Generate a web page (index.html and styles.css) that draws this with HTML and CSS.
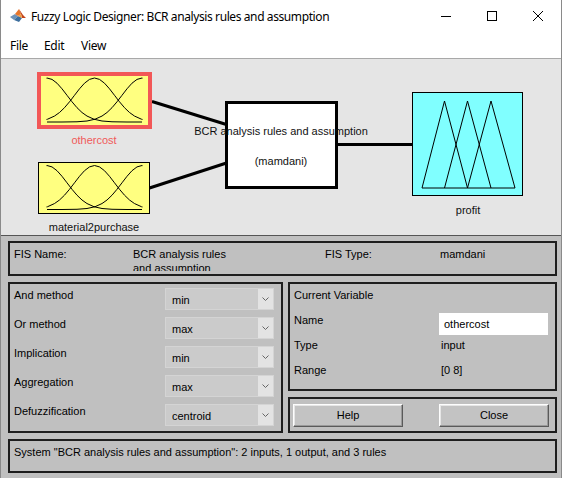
FILE: index.html
```html
<!DOCTYPE html>
<html>
<head>
<meta charset="utf-8">
<title>Fuzzy Logic Designer</title>
<link rel="stylesheet" href="styles.css">
</head>
<body>
<div class="window">
  <div class="titlebar">
    <svg class="app-icon" width="16" height="14" viewBox="0 0 16 14">
      <polygon points="0,8 5,5 8,7 4,11" fill="#6f93b8"/>
      <polygon points="4,11 8,7 12,9 9,13" fill="#3d6f9e"/>
      <polygon points="5,5 9,0 11,5 8,7" fill="#e8762b"/>
      <polygon points="9,0 13,6 16,9 12,9 11,5" fill="#c2441a"/>
      <polygon points="8,7 11,5 12,9" fill="#f09a3e"/>
    </svg>
    <span class="title">Fuzzy Logic Designer: BCR analysis rules and assumption</span>
    <div class="controls">
      <span class="ctl"><svg width="10" height="10" viewBox="0 0 10 10"><line x1="0" y1="5.5" x2="10" y2="5.5" stroke="#000" stroke-width="1"/></svg></span>
      <span class="ctl"><svg width="10" height="10" viewBox="0 0 10 10"><rect x="0.5" y="0.5" width="9" height="9" fill="none" stroke="#000" stroke-width="1"/></svg></span>
      <span class="ctl"><svg width="10" height="10" viewBox="0 0 10 10"><path d="M0,0 L10,10 M10,0 L0,10" stroke="#000" stroke-width="1"/></svg></span>
    </div>
  </div>
  <div class="menubar">
    <span class="menu-item m-file">File</span>
    <span class="menu-item m-edit">Edit</span>
    <span class="menu-item">View</span>
  </div>
  <div class="diagram">
    <svg width="560" height="176" viewBox="1 59 560 176">
      <defs>
        <path id="gauss" d="M-95,0 L-80,0 L-65,-0.22 L-55,-1 L-47,-2.78 L-40,-5.95 L-35,-9.5 L-30,-14.3 L-25,-20.2 L-20,-26.7 L-15,-33.2 L-10,-38.8 L-5,-42.6 L0,-44 L5,-42.6 L10,-38.8 L15,-33.2 L20,-26.7 L25,-20.2 L30,-14.3 L35,-9.5 L40,-5.95 L47,-2.78 L55,-1 L65,-0.22 L80,0 L95,0" fill="none" stroke="#000" stroke-width="1" stroke-linejoin="round"/>
        <clipPath id="c1"><rect x="46.5" y="70" width="96" height="60"/></clipPath>
        <clipPath id="c2"><rect x="46.5" y="160" width="96" height="55"/></clipPath>
      </defs>
      <line x1="152" y1="101.5" x2="228" y2="125" stroke="#000" stroke-width="3"/>
      <line x1="149.5" y1="188" x2="228" y2="162.5" stroke="#000" stroke-width="3"/>
      <line x1="336" y1="144.5" x2="412.5" y2="144.5" stroke="#000" stroke-width="3"/>

      <rect x="39" y="74" width="111" height="53" fill="#ffff80" stroke="#f25757" stroke-width="4"/>
      <g clip-path="url(#c1)">
        <use href="#gauss" transform="translate(47,122)"/>
        <use href="#gauss" transform="translate(94.5,122)"/>
        <use href="#gauss" transform="translate(142,122)"/>
      </g>
      <text class="lbl-red" x="94" y="144" text-anchor="middle">othercost</text>

      <rect x="38.5" y="162.5" width="111" height="51" fill="#ffff80" stroke="#000" stroke-width="1"/>
      <g clip-path="url(#c2)">
        <use href="#gauss" transform="translate(47,209.5)"/>
        <use href="#gauss" transform="translate(94.5,209.5)"/>
        <use href="#gauss" transform="translate(142,209.5)"/>
      </g>
      <text class="lbl" x="94" y="231" text-anchor="middle">material2purchase</text>

      <rect x="226.5" y="102.5" width="110" height="85" fill="#fff" stroke="#000" stroke-width="3"/>
      <text class="lbl" x="281" y="135" text-anchor="middle">BCR analysis rules and assumption</text>
      <text class="lbl" x="281" y="165" text-anchor="middle">(mamdani)</text>

      <rect x="412.5" y="92.5" width="110" height="103" fill="#80ffff" stroke="#000" stroke-width="1"/>
      <g fill="none" stroke="#000" stroke-width="1">
        <polyline points="422,188 444.5,101 467.5,188"/>
        <polyline points="444.5,188 467.5,101 491,188"/>
        <polyline points="467.5,188 491,101 515,188"/>
        <line x1="422" y1="188" x2="515" y2="188"/>
      </g>
      <text class="lbl" x="468" y="214" text-anchor="middle">profit</text>
    </svg>
  </div>
  <div class="lower">
    <div class="panel fis">
      <span class="f-label">FIS Name:</span>
      <span class="f-name">BCR analysis rules and assumption</span>
      <span class="f-type">FIS Type:</span>
      <span class="f-val">mamdani</span>
    </div>
    <div class="mid">
      <div class="panel methods">
        <div class="row"><span class="lbl">And method</span><div class="select"><span class="val">min</span><span class="arr"><svg width="7" height="4" viewBox="0 0 7 4"><polyline points="0.5,0.5 3.5,3.5 6.5,0.5" fill="none" stroke="#666" stroke-width="1"/></svg></span></div></div>
        <div class="row"><span class="lbl">Or method</span><div class="select"><span class="val">max</span><span class="arr"><svg width="7" height="4" viewBox="0 0 7 4"><polyline points="0.5,0.5 3.5,3.5 6.5,0.5" fill="none" stroke="#666" stroke-width="1"/></svg></span></div></div>
        <div class="row"><span class="lbl">Implication</span><div class="select"><span class="val">min</span><span class="arr"><svg width="7" height="4" viewBox="0 0 7 4"><polyline points="0.5,0.5 3.5,3.5 6.5,0.5" fill="none" stroke="#666" stroke-width="1"/></svg></span></div></div>
        <div class="row"><span class="lbl">Aggregation</span><div class="select"><span class="val">max</span><span class="arr"><svg width="7" height="4" viewBox="0 0 7 4"><polyline points="0.5,0.5 3.5,3.5 6.5,0.5" fill="none" stroke="#666" stroke-width="1"/></svg></span></div></div>
        <div class="row"><span class="lbl">Defuzzification</span><div class="select"><span class="val">centroid</span><span class="arr"><svg width="7" height="4" viewBox="0 0 7 4"><polyline points="0.5,0.5 3.5,3.5 6.5,0.5" fill="none" stroke="#666" stroke-width="1"/></svg></span></div></div>
      </div>
      <div class="rightcol">
        <div class="panel cv">
          <div class="cv-row"><span class="lbl">Current Variable</span></div>
          <div class="cv-row"><span class="lbl">Name</span><span class="tbox">othercost</span></div>
          <div class="cv-row"><span class="lbl">Type</span><span class="cv-val">input</span></div>
          <div class="cv-row"><span class="lbl">Range</span><span class="cv-val">[0 8]</span></div>
        </div>
        <div class="panel btns">
          <span class="btn">Help</span>
          <span class="btn">Close</span>
        </div>
      </div>
    </div>
    <div class="panel status">System "BCR analysis rules and assumption": 2 inputs, 1 output, and 3 rules</div>
  </div>
</div>
</body>
</html>
```

FILE: styles.css
```css
* { box-sizing: border-box; }

body {
  margin: 0;
  background: #ffffff;
  font-family: "Liberation Sans", Arial, sans-serif;
  font-size: 11px;
  color: #000;
}

.window {
  width: 562px;
  height: 478px;
  border-left: 1px solid #8a8a8a;
  border-right: 1px solid #8a8a8a;
  display: flex;
  flex-direction: column;
  overflow: hidden;
}

.titlebar {
  height: 32px;
  flex: none;
  display: flex;
  align-items: center;
  background: #fff;
}

.app-icon {
  margin-left: 9px;
  margin-right: 5px;
  flex: none;
}

.title {
  font-family: "Noto Sans", "Open Sans", sans-serif;
  font-size: 12px;
  letter-spacing: -0.4px;
  color: #000;
}

.controls {
  margin-left: auto;
  display: flex;
  height: 32px;
}

.ctl {
  width: 46px;
  display: flex;
  align-items: center;
  justify-content: center;
}

.ctl svg { display: block; }

.menubar {
  height: 27px;
  flex: none;
  border-bottom: 1px solid #a8a8a8;
  display: flex;
  align-items: center;
  padding-left: 9px;
  font-family: "Noto Sans", "Open Sans", sans-serif;
  font-size: 12px;
  letter-spacing: -0.3px;
  background: #fff;
}

.menu-item { display: inline-block; }
.m-file { width: 34px; }
.m-edit { width: 37px; }

.diagram {
  height: 176px;
  flex: none;
  background: #e5e5e5;
}

.diagram svg { display: block; }

.diagram text {
  font-family: "Liberation Sans", Arial, sans-serif;
  font-size: 11px;
}

.diagram .lbl { fill: #111; }
.diagram .lbl-red { fill: #f05a5a; }

.lower {
  flex: 1;
  background: #c0c0c0;
  border-top: 1px solid #555;
  padding: 5px 4px 0 7px;
  display: flex;
  flex-direction: column;
  gap: 6px;
}

.panel {
  border: 2px solid #1e1e1e;
}

.fis {
  height: 35px;
  display: flex;
  align-items: flex-start;
  padding: 4px 0 0 4px;
  line-height: 14px;
}

.f-label { width: 119px; flex: none; }
.f-name { width: 110px; margin-right: 82px; height: 24px; overflow: hidden; flex: none; }
.f-type { width: 115px; flex: none; }

.mid {
  display: flex;
  gap: 5px;
  height: 151px;
}

.methods {
  width: 275px;
  height: 151px;
  padding: 4px 7px 0 4px;
  display: flex;
  flex-direction: column;
  gap: 7px;
}

.row {
  display: flex;
  align-items: flex-start;
  height: 22px;
}

.row .lbl {
  width: 151px;
  line-height: 14px;
}

.select {
  width: 109px;
  height: 22px;
  display: flex;
  border: 1px solid #d4d4d4;
  background: #cbcbcb;
}

.select .val {
  flex: 1;
  padding: 3px 0 0 6px;
  line-height: 16px;
}

.select .arr {
  width: 15px;
  background: #e3e3e3;
  display: flex;
  align-items: center;
  justify-content: center;
}

.select .arr svg { display: block; }

.rightcol {
  width: 269px;
  display: flex;
  flex-direction: column;
  gap: 6px;
}

.cv {
  height: 109px;
  padding: 4px 7px 0 4px;
}

.cv-row {
  display: flex;
  align-items: flex-start;
  height: 25px;
  line-height: 14px;
}

.cv-row .lbl { width: 145px; flex: none; }

.tbox {
  width: 109px;
  height: 22px;
  background: #fff;
  padding-left: 5px;
  line-height: 22px;
}

.cv-val { padding-left: 2px; }

.btns {
  height: 36px;
  display: flex;
  padding: 5px 0 0 3px;
  gap: 36px;
}

.btn {
  width: 110px;
  height: 23px;
  background: #c3c3c3;
  border-top: 1px solid #fdfdfd;
  border-left: 1px solid #fdfdfd;
  border-right: 1px solid #5a5a5a;
  border-bottom: 1px solid #5a5a5a;
  box-shadow: inset -1px -1px 0 #9a9a9a, inset 1px 1px 0 #e6e6e6;
  text-align: center;
  line-height: 21px;
}

.status {
  height: 34px;
  padding: 4px 0 0 4px;
  line-height: 14px;
}
```
